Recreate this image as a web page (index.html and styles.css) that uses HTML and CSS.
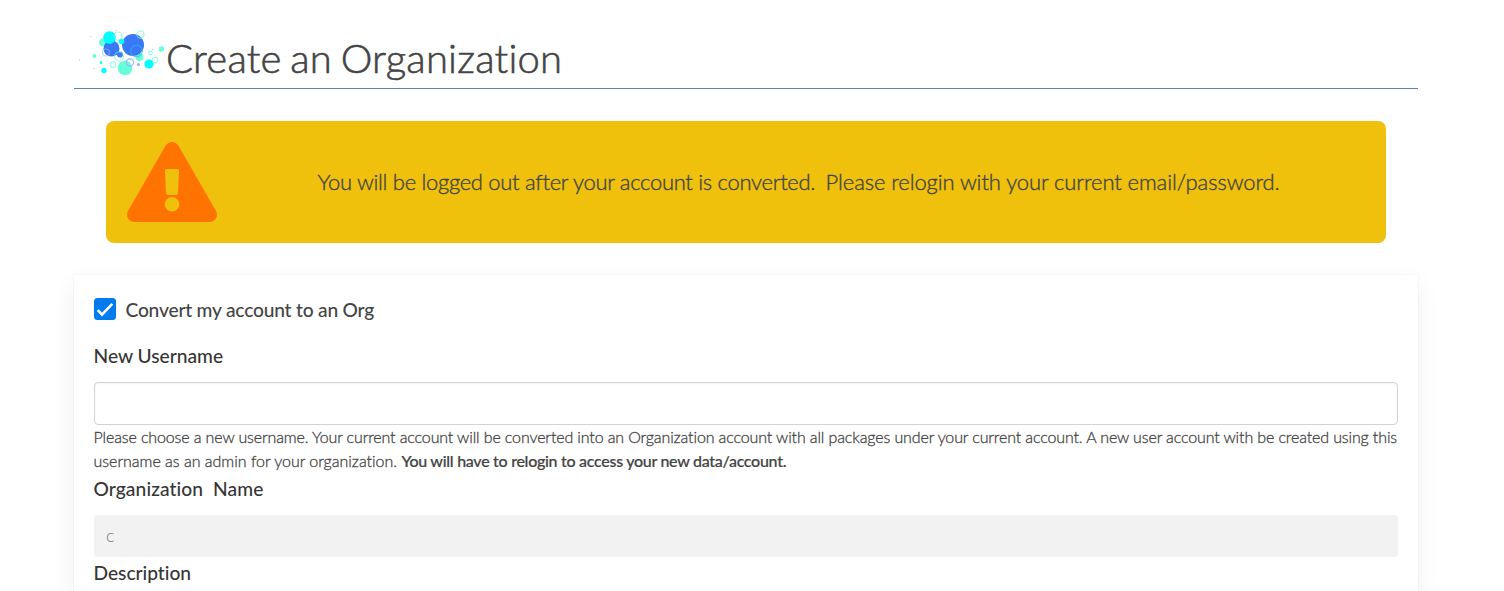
FILE: index.html
```html
<!DOCTYPE html>
<html lang="en">
<head>
<meta charset="utf-8">
<title>Create an Organization</title>
<link rel="stylesheet" href="styles.css">
</head>
<body>
<main class="page">
  <header class="page-header">
    <svg class="logo" viewBox="0 0 90 52" width="90" height="52" aria-hidden="true">
      <g fill="#66ffd9"><circle cx="29" cy="16.500" r="4"/><circle cx="65.500" cy="31" r="4"/><circle cx="51" cy="42" r="7.300"/><circle cx="87.500" cy="23" r="2.700"/><circle cx="20.500" cy="30" r="2"/></g>
      <g fill="#3b78f5"><circle cx="59" cy="19" r="11"/><circle cx="37.500" cy="22.500" r="8"/><circle cx="46" cy="28.500" r="3"/><circle cx="64.500" cy="38.500" r="1.500" opacity=".6"/></g>
      <g fill="#00ffff"><circle cx="35.500" cy="11.500" r="6.300"/><circle cx="47.500" cy="15.500" r="2.800"/><circle cx="75" cy="38" r="4.600"/><circle cx="30" cy="44.500" r="2.700"/><circle cx="27" cy="36.700" r="1.400"/></g>
      <g fill="none" stroke="#66ffd9" stroke-width="1.100" opacity=".7"><circle cx="44" cy="10" r="4"/><circle cx="66.500" cy="8.500" r="3.600"/><circle cx="45" cy="30.500" r="4.500"/><circle cx="39" cy="38.500" r="2.800"/><circle cx="81" cy="34" r="2.600"/><circle cx="76.500" cy="27" r="1.800" stroke="#4ff"/><circle cx="62.500" cy="25" r="5.800" stroke="#28b8f0"/></g>
      <g fill="none" stroke="#9ab8fa" stroke-width="1.200"><circle cx="56" cy="36.500" r="3.600"/><circle cx="32" cy="26.500" r="3.500" opacity=".6"/></g>
      <g fill="#b4c5fb"><circle cx="5.500" cy="34" r=".7"/><circle cx="17" cy="10.500" r=".7"/><circle cx="20" cy="42.500" r=".7"/><circle cx="42" cy="4.500" r=".7"/><circle cx="78.500" cy="23.500" r=".7"/></g>
    </svg>
    <h1 class="title">Create an Organization</h1>
  </header>
  <section class="notice">
    <svg class="warning" viewBox="0 0 90 80" width="90" height="80" aria-hidden="true">
      <path fill="#ff7300" fill-rule="evenodd" d="M38.500 3.800Q41 0 45 0Q49 0 51.500 3.800L89 69Q91 73 88.800 76.500Q86.500 80 82.500 80H7.500Q3.500 80 1.200 76.500Q-1 73 1 69ZM39.500 27Q38 27 38 28.500L39 51Q39 53 41 53H49Q51 53 51 51L52 28.500Q52 27 50.500 27ZM45 55A7.200 7.200 0 1 0 45 69.600A7.200 7.200 0 1 0 45 55Z"/>
    </svg>
    <p class="notice-text">You will be logged out after your account is converted.&nbsp; <span class="notice-action">Please relogin with your current email/password.</span></p>
  </section>
  <form class="card">
    <label class="choice">
      <svg class="check" viewBox="0 0 22 22" width="22" height="22" aria-hidden="true"><rect width="22" height="22" rx="3.500" fill="#007bef"/><path d="M3.800 12.200L8 16.600L18.300 5.800" fill="none" stroke="#fff" stroke-width="2.600"/></svg>
      <span>Convert my account to an Org</span>
    </label>
    <label class="label username-label" for="username">New Username</label>
    <input class="input" id="username" type="text">
    <p class="help"><span class="help-intro">Please choose a new username. Your current account will be converted into an Organization account with all packages under your current account. A new user account with be created using this</span><br>username as an admin for your organization. <strong>You will have to relogin to access your new data/account.</strong></p>
    <label class="label org-label" for="org">Organization&nbsp; Name</label>
    <input class="input disabled" id="org" type="text" value="c" disabled>
    <div class="label desc-label">Description</div>
  </form>
</main>
</body>
</html>
```
FILE: styles.css
```css
*{box-sizing:border-box}
body{margin:0;background:#fff;color:#444;font-family:Lato,sans-serif;font-size:16px;font-variant-ligatures:none}
.page{width:1344px;height:591px;margin-left:74px;padding-top:25px;display:flex;flex-direction:column}
.page-header{display:flex;flex:none;height:64px;border-bottom:1px solid #5e84a0}
.logo{margin-top:1px;flex:none}
.title{margin:3px 0 0 2px;font-size:40px;font-weight:300;line-height:60px;letter-spacing:.22px;word-spacing:-2.500px;white-space:nowrap;-webkit-text-stroke:.6px #444}
.notice{display:flex;flex:none;height:122px;margin:32px;padding:21px;background:#efc00c;border-radius:8px}
.warning{flex:none}
.notice-text{margin:-1px 0 0 100.500px;font-size:22px;line-height:81px;letter-spacing:-.3px;white-space:nowrap;font-weight:300;-webkit-text-stroke:.35px #444}
.notice-action{margin-left:-1px;letter-spacing:-.1px}
.card{flex:1;min-height:0;padding:20px;background:#fff;box-shadow:0 8px 24px -2px rgba(10,10,10,.08),0 0 0 1px rgba(10,10,10,.02)}
.choice{display:flex;font-size:19.200px;line-height:30px;height:48px;letter-spacing:-.2px;white-space:nowrap;font-weight:500}
.check{margin:3px 9.500px 0 0}
.label{display:block;color:#363636;font-size:19.200px;line-height:28px;white-space:nowrap;font-weight:500;text-indent:-.5px}
.username-label{height:39px;margin-top:-1px;margin-bottom:1px}
.input{display:block;width:100%;height:43px;padding:0 12px;border:1px solid #d3d3d3;border-radius:4px;box-shadow:inset 0 1px 2px rgba(10,10,10,.05);font:300 16px Lato,sans-serif}
.help{margin:0 0 0 -.5px;line-height:24px;white-space:nowrap;font-weight:300;letter-spacing:-.01px;-webkit-text-stroke:.3px #444}
.help-intro{letter-spacing:-.124px}
.help strong{font-weight:500;letter-spacing:-.28px;-webkit-text-stroke:.2px #444}
.org-label{height:40px;margin-top:2px;letter-spacing:.1px}
.disabled{height:42px;padding:0 11px 3px;border-color:#f2f2f2;background:#f2f2f2;color:#7a7a7a;box-shadow:none;font-size:18px}
.desc-label{height:14px;margin-top:2px;letter-spacing:-.02px}
```
